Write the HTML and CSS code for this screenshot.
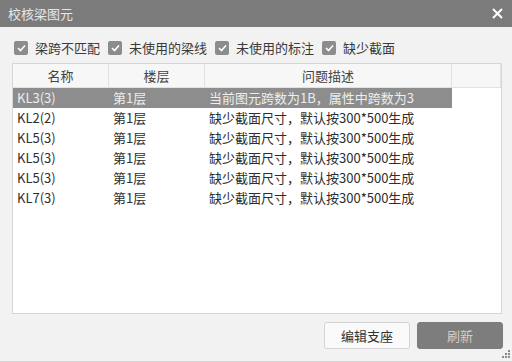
FILE: index.html
```html
<!DOCTYPE html>
<html lang="zh">
<head>
<meta charset="utf-8">
<link rel="stylesheet" href="styles.css">
</head>
<body>
<div class="dialog">
  <div class="titlebar">
    <span class="title">校核梁图元</span>
    <svg class="close" width="11" height="11" viewBox="0 0 11 11"><path d="M1 1L10 10M10 1L1 10" stroke="#fff" stroke-width="2"/></svg>
  </div>
  <div class="filters">
    <label class="chk"><span class="box"><svg width="9" height="8" viewBox="0 0 9 8"><path d="M1 4L3.5 6.5L8 1.5" stroke="#fff" stroke-width="1.6" fill="none"/></svg></span>梁跨不匹配</label>
    <label class="chk"><span class="box"><svg width="9" height="8" viewBox="0 0 9 8"><path d="M1 4L3.5 6.5L8 1.5" stroke="#fff" stroke-width="1.6" fill="none"/></svg></span>未使用的梁线</label>
    <label class="chk"><span class="box"><svg width="9" height="8" viewBox="0 0 9 8"><path d="M1 4L3.5 6.5L8 1.5" stroke="#fff" stroke-width="1.6" fill="none"/></svg></span>未使用的标注</label>
    <label class="chk"><span class="box"><svg width="9" height="8" viewBox="0 0 9 8"><path d="M1 4L3.5 6.5L8 1.5" stroke="#fff" stroke-width="1.6" fill="none"/></svg></span>缺少截面</label>
  </div>
  <div class="grid">
    <div class="head">名称</div><div class="head">楼层</div><div class="head">问题描述</div><div class="head last"></div>
    <div class="cell sel">KL3(3)</div><div class="cell sel">第1层</div><div class="cell sel">当前图元跨数为1B，属性中跨数为3</div><div class="cell"></div>
    <div class="cell">KL2(2)</div><div class="cell">第1层</div><div class="cell">缺少截面尺寸，默认按300*500生成</div><div class="cell"></div>
    <div class="cell">KL5(3)</div><div class="cell">第1层</div><div class="cell">缺少截面尺寸，默认按300*500生成</div><div class="cell"></div>
    <div class="cell">KL5(3)</div><div class="cell">第1层</div><div class="cell">缺少截面尺寸，默认按300*500生成</div><div class="cell"></div>
    <div class="cell">KL5(3)</div><div class="cell">第1层</div><div class="cell">缺少截面尺寸，默认按300*500生成</div><div class="cell"></div>
    <div class="cell">KL7(3)</div><div class="cell">第1层</div><div class="cell">缺少截面尺寸，默认按300*500生成</div><div class="cell"></div>
  </div>
  <div class="actions">
    <button class="btn">编辑支座</button>
    <button class="btn primary">刷新</button>
  </div>
  <svg class="grip" width="8" height="8" viewBox="0 0 8 8"><g fill="#8a8a8a"><rect x="6" y="0" width="2" height="2"/><rect x="3" y="3" width="2" height="2"/><rect x="6" y="3" width="2" height="2"/><rect x="0" y="6" width="2" height="2"/><rect x="3" y="6" width="2" height="2"/><rect x="6" y="6" width="2" height="2"/></g></svg>
</div>
</body>
</html>
```
FILE: styles.css
```css
* { box-sizing: border-box; }
html, body { margin: 0; padding: 0; }
body {
  width: 512px; height: 362px; overflow: hidden;
  background: #f2f2f2;
  font-family: "Noto Sans CJK SC", "Noto Sans", sans-serif;
  font-size: 13px;
  color: #333;
}
.dialog {
  position: relative;
  width: 512px; height: 362px;
  display: flex; flex-direction: column;
  border-bottom: 1px solid #d8d8d8;
}
.titlebar {
  height: 27px;
  background: #7b7b7b;
  display: flex; align-items: center; justify-content: space-between;
  padding: 0 9px 0 8px;
  color: #e6e6e6;
  flex: none;
}
.title { line-height: 27px; }
.close { display: block; }
.filters {
  display: flex; align-items: center;
  margin: 14px 0 0 14px;
  height: 13px;
  gap: 8px;
  color: #3a3a3a;
}
.chk { display: flex; align-items: center; gap: 7px; line-height: 13px; }
.box {
  width: 14px; height: 14px; border-radius: 2px;
  background: #8c8c8c;
  display: flex; align-items: center; justify-content: center;
}
.box svg { display: block; }
.grid {
  margin: 9px 10px 0 12px;
  height: 251px;
  background: #fff;
  border: 1px solid #d6d6d6;
  display: grid;
  grid-template-columns: 96px 96px 247px 1fr;
  grid-template-rows: 24px repeat(6, 20px) 1fr;
}
.head {
  background: #f7f7f7;
  border-right: 1px solid #e2e2e2;
  border-bottom: 1px solid #e2e2e2;
  text-align: center;
  line-height: 23px;
  color: #444;
}
.head.last { border-right: 1px solid #e2e2e2; }
.cell {
  padding-left: 4px;
  line-height: 20px;
  white-space: nowrap;
  overflow: hidden;
  color: #2e2e2e;
}
.cell.sel { background: #8d8d8d; color: #eeeeee; }
.actions {
  display: flex; justify-content: flex-end; gap: 7px;
  margin: 8px 9px 0 0;
}
.btn {
  width: 86px; height: 27px;
  font-family: inherit; font-size: 13px;
  border-radius: 3px;
  border: 1px solid #d4d4d4;
  background: #fafafa;
  color: #333;
  padding: 0;
}
.btn.primary { background: #7d7d7d; border-color: #7d7d7d; color: #cfcfcf; }
.grip { position: absolute; right: 2px; bottom: 3px; }
```
